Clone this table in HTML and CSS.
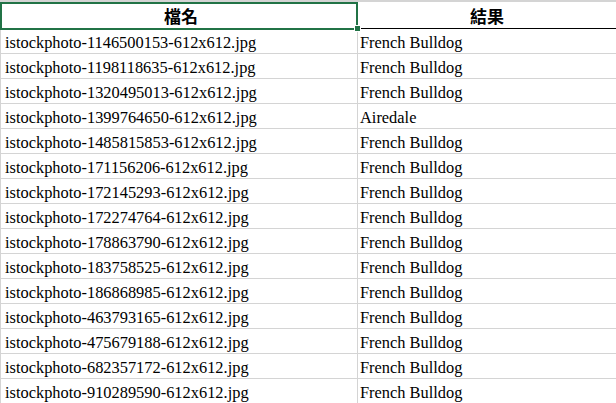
FILE: index.html
```html
<!DOCTYPE html>
<html lang="zh-Hant">
<head>
<meta charset="utf-8">
<link rel="stylesheet" href="styles.css">
</head>
<body>
<div class="sheet">
  <div class="topline"></div>
  <div class="row head">
    <div class="cell a hcell selected">檔名<span class="sel"></span><span class="handle"></span></div>
    <div class="cell b hcell">結果</div>
  </div>
  <div class="row"><div class="cell a">istockphoto-1146500153-612x612.jpg</div><div class="cell b">French Bulldog</div></div>
  <div class="row"><div class="cell a">istockphoto-1198118635-612x612.jpg</div><div class="cell b">French Bulldog</div></div>
  <div class="row"><div class="cell a">istockphoto-1320495013-612x612.jpg</div><div class="cell b">French Bulldog</div></div>
  <div class="row"><div class="cell a">istockphoto-1399764650-612x612.jpg</div><div class="cell b">Airedale</div></div>
  <div class="row"><div class="cell a">istockphoto-1485815853-612x612.jpg</div><div class="cell b">French Bulldog</div></div>
  <div class="row"><div class="cell a">istockphoto-171156206-612x612.jpg</div><div class="cell b">French Bulldog</div></div>
  <div class="row"><div class="cell a">istockphoto-172145293-612x612.jpg</div><div class="cell b">French Bulldog</div></div>
  <div class="row"><div class="cell a">istockphoto-172274764-612x612.jpg</div><div class="cell b">French Bulldog</div></div>
  <div class="row"><div class="cell a">istockphoto-178863790-612x612.jpg</div><div class="cell b">French Bulldog</div></div>
  <div class="row"><div class="cell a">istockphoto-183758525-612x612.jpg</div><div class="cell b">French Bulldog</div></div>
  <div class="row"><div class="cell a">istockphoto-186868985-612x612.jpg</div><div class="cell b">French Bulldog</div></div>
  <div class="row"><div class="cell a">istockphoto-463793165-612x612.jpg</div><div class="cell b">French Bulldog</div></div>
  <div class="row"><div class="cell a">istockphoto-475679188-612x612.jpg</div><div class="cell b">French Bulldog</div></div>
  <div class="row"><div class="cell a">istockphoto-682357172-612x612.jpg</div><div class="cell b">French Bulldog</div></div>
  <div class="row"><div class="cell a">istockphoto-910289590-612x612.jpg</div><div class="cell b">French Bulldog</div></div>
</div>
</body>
</html>
```
FILE: styles.css
```css
html, body {
  margin: 0;
  padding: 0;
  background: #ffffff;
  overflow: hidden;
}
.sheet {
  width: 616px;
  height: 403px;
  overflow: hidden;
  font-family: "Liberation Serif", "Noto Sans CJK TC", serif;
  color: #000;
}
.topline {
  height: 2px;
  background: #d4d4d4;
}
.row {
  display: grid;
  grid-template-columns: 358px 258px;
  height: 25px;
}
.cell {
  box-sizing: border-box;
  border-bottom: 1px solid #d4d4d4;
  display: flex;
  align-items: flex-end;
  white-space: nowrap;
  font-size: 16.4px;
  line-height: 19px;
  padding-bottom: 1px;
}
.cell.a {
  border-left: 1px solid #d4d4d4;
  border-right: 1px solid #d4d4d4;
  padding-left: 4px;
}
.cell.b {
  padding-left: 2px;
}
.row.head {
  height: 27px;
}
.hcell {
  border-bottom: 1px solid #000;
  justify-content: center;
  font-family: "Noto Sans CJK TC", sans-serif;
  font-weight: 700;
  font-size: 17px;
  line-height: 22px;
  padding-left: 0;
  padding-bottom: 1px;
}
.hcell.a {
  padding-left: 4px;
}
.hcell.b {
  padding-left: 0;
}
.selected {
  position: relative;
}
.sel {
  position: absolute;
  left: -1px;
  top: 0;
  width: 358px;
  height: 28px;
  box-sizing: border-box;
  border: 2px solid #217346;
}
.handle {
  position: absolute;
  left: 354px;
  top: 24px;
  width: 5px;
  height: 5px;
  background: #217346;
  outline: 1px solid #ffffff;
}
```
